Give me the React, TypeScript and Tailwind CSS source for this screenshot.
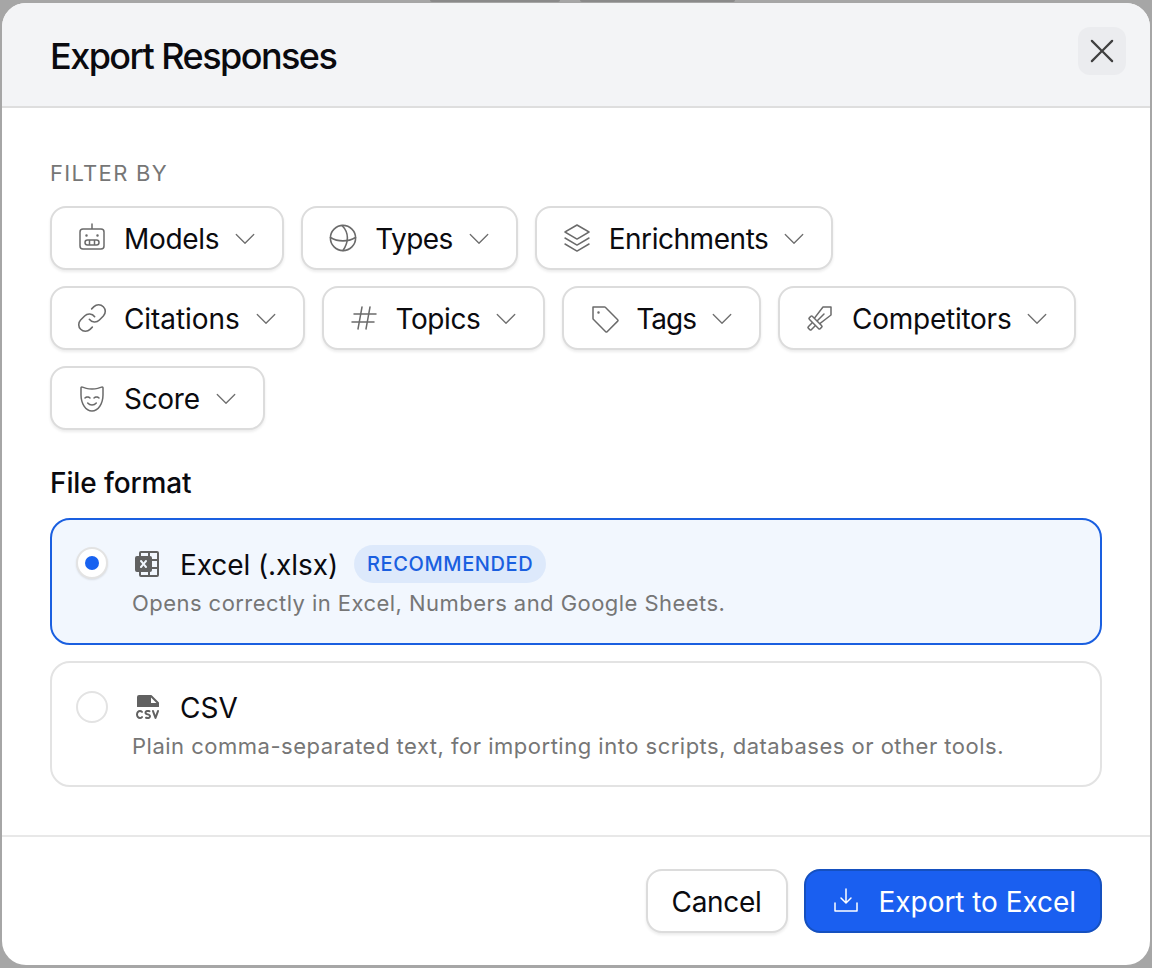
import React from "react";
import { Link } from "lucide-react";
import {
  PiRobotLight, PiStackLight, PiHashLight, PiTagLight, PiSwordLight,
  PiMaskHappyLight, PiCaretDownLight, PiX, PiDownloadSimpleLight, PiMicrosoftExcelLogoFill, PiFileCsvFill,
} from "react-icons/pi";

function GlobeIcon({ className }: { className?: string }) {
  return (
    <svg viewBox="0 0 32 32" fill="none" stroke="currentColor" strokeWidth="1.6" strokeLinecap="round" className={className}>
      <circle cx="16" cy="16" r="12.6" />
      <path d="M15 3.5c3.6 3.6 5.4 8 5.4 12.3s-1.6 8.600-4.400 12.700" />
      <path d="M3.500 15.500c3.900 2.400 8 3.400 12.500 3.400s8.500-1 12.500-3.400" />
    </svg>
  );
}

function LinkIcon({ className }: { className?: string }) {
  return <Link className={className} strokeWidth={1.2} />;
}

function Chip({ icon: Icon, label, tracking = "tracking-[-0.3px]" }: { icon: React.ComponentType<{ className?: string }>; label: string; tracking?: string }) {
  return (
    <button className="flex h-16 items-center rounded-2xl border-2 border-[#dcdcdc] bg-white pl-6 pr-[23px] shadow-[0_2px_3px_rgba(0,0,0,0.08)]">
      <Icon className="h-8 w-8 text-[#6b6b6b]" />
      <span className={`ml-4 mt-px text-[28px] leading-none text-[#0b0b0f] ${tracking}`}>{label}</span>
      <PiCaretDownLight className="ml-3 h-7 w-7 text-[#6f6f6f]" />
    </button>
  );
}

export default function App() {
  return (
    <div className="relative flex h-[968px] w-[1152px] overflow-hidden bg-[#a6a6a6] px-[2px] pb-[3px] pt-[3px] font-['Inter',sans-serif]">
      <div className="absolute left-[430px] top-0 h-[2px] w-[130px] rounded-b bg-[#8a8a8a]" />
      <div className="absolute left-[580px] top-0 h-[2px] w-[155px] rounded-b bg-[#8a8a8a]" />
      <div className="relative flex w-full flex-col overflow-hidden rounded-[24px] bg-white">
        <header className="flex h-[105px] shrink-0 items-start justify-between border-b-2 border-[#dedede] bg-[#f3f4f6] pl-[48px] pr-[24px]">
          <h1 className="mt-[31px] text-[36px] font-medium leading-[44px] tracking-[-1.55px] text-[#0a0a0f]">Export Responses</h1>
          <button className="mt-[24px] flex h-12 w-12 items-center justify-center rounded-xl bg-[#ebecef]">
            <PiX className="h-9 w-9 text-[#404040]" />
          </button>
        </header>
        <main className="flex-1 px-[48px] pt-[51px]">
          <div className="text-[22px] font-normal leading-7 tracking-[1.3px] text-[#767676]">FILTER BY</div>
          <div className="mt-[19px] flex flex-wrap gap-x-[17px] gap-y-4">
            <Chip icon={PiRobotLight} label="Models" />
            <Chip icon={GlobeIcon} label="Types" tracking="tracking-[-0.6px]" />
            <Chip icon={PiStackLight} label="Enrichments" tracking="tracking-[-0.45px]" />
            <Chip icon={LinkIcon} label="Citations" tracking="tracking-[-0.08px]" />
            <Chip icon={PiHashLight} label="Topics" tracking="tracking-[-0.45px]" />
            <Chip icon={PiTagLight} label="Tags" tracking="tracking-[-1px]" />
            <Chip icon={PiSwordLight} label="Competitors" tracking="tracking-[-0.25px]" />
            <Chip icon={PiMaskHappyLight} label="Score" />
          </div>
          <div className="mt-[35px] text-[28px] font-medium leading-9 tracking-[-0.12px] text-[#0a0a0f]">File format</div>
          <div className="mt-[17px] flex h-[127px] rounded-[20px] border-2 border-[#1a5fe0] bg-[#f2f7fe] pl-6 pt-[25px]">
            <div className="mt-[2px] flex h-8 w-8 items-center justify-center rounded-full border-2 border-[#e3e3e3] bg-white shadow-[0_1px_2px_rgba(0,0,0,0.1)]">
              <div className="h-3.5 w-3.5 rounded-full bg-[#1862f0]" />
            </div>
            <div className="ml-6">
              <div className="flex h-[38px] items-center">
                <PiMicrosoftExcelLogoFill className="h-8 w-8 text-[#616161]" />
                <span className="ml-4 mt-px text-[28px] leading-none tracking-[-0.08px] text-[#0a0a0f]">Excel (.xlsx)</span>
                <span className="ml-4 flex h-[38px] items-center rounded-full bg-[#dde9fb] px-[13px] text-[20px] font-medium tracking-[0.6px] text-[#1a5fe0]">RECOMMENDED</span>
              </div>
              <div className="mt-[6px] text-[22px] leading-7 tracking-[0.45px] text-[#767676]">Opens correctly in Excel, Numbers and Google Sheets.</div>
            </div>
          </div>
          <div className="mt-4 flex h-[126px] rounded-[20px] border-2 border-[#e3e3e3] bg-white pl-6 pt-[28px]">
            <div className="h-8 w-8 rounded-full border-2 border-[#e3e3e3] bg-white" />
            <div className="-mt-px ml-6">
              <div className="flex h-9 items-center">
                <PiFileCsvFill className="h-8 w-8 text-[#616161]" />
                <span className="ml-4 text-[28px] leading-none text-[#0a0a0f]">CSV</span>
              </div>
              <div className="mt-[6px] text-[22px] leading-7 tracking-[0.5px] text-[#767676]">Plain comma-separated text, for importing into scripts, databases or other tools.</div>
            </div>
          </div>
        </main>
        <footer className="flex h-[130px] shrink-0 items-start justify-end gap-[16px] border-t-2 border-[#e8e8e8] pr-[48px] pt-[32px]">
          <button className="flex h-16 items-center rounded-2xl border-2 border-[#dcdcdc] bg-white px-6 pt-px text-[28px] font-normal tracking-[-0.3px] text-[#0a0a0f] shadow-[0_2px_3px_rgba(0,0,0,0.08)]">Cancel</button>
          <button className="flex h-16 items-center rounded-2xl border-2 border-[#1550bf] bg-[#1a5ff0] px-6 text-[28px] font-normal tracking-[-0.05px] text-white">
            <PiDownloadSimpleLight className="h-8 w-8" />
            <span className="ml-[17px] mt-px">Export to Excel</span>
          </button>
        </footer>
      </div>
    </div>
  );
}
